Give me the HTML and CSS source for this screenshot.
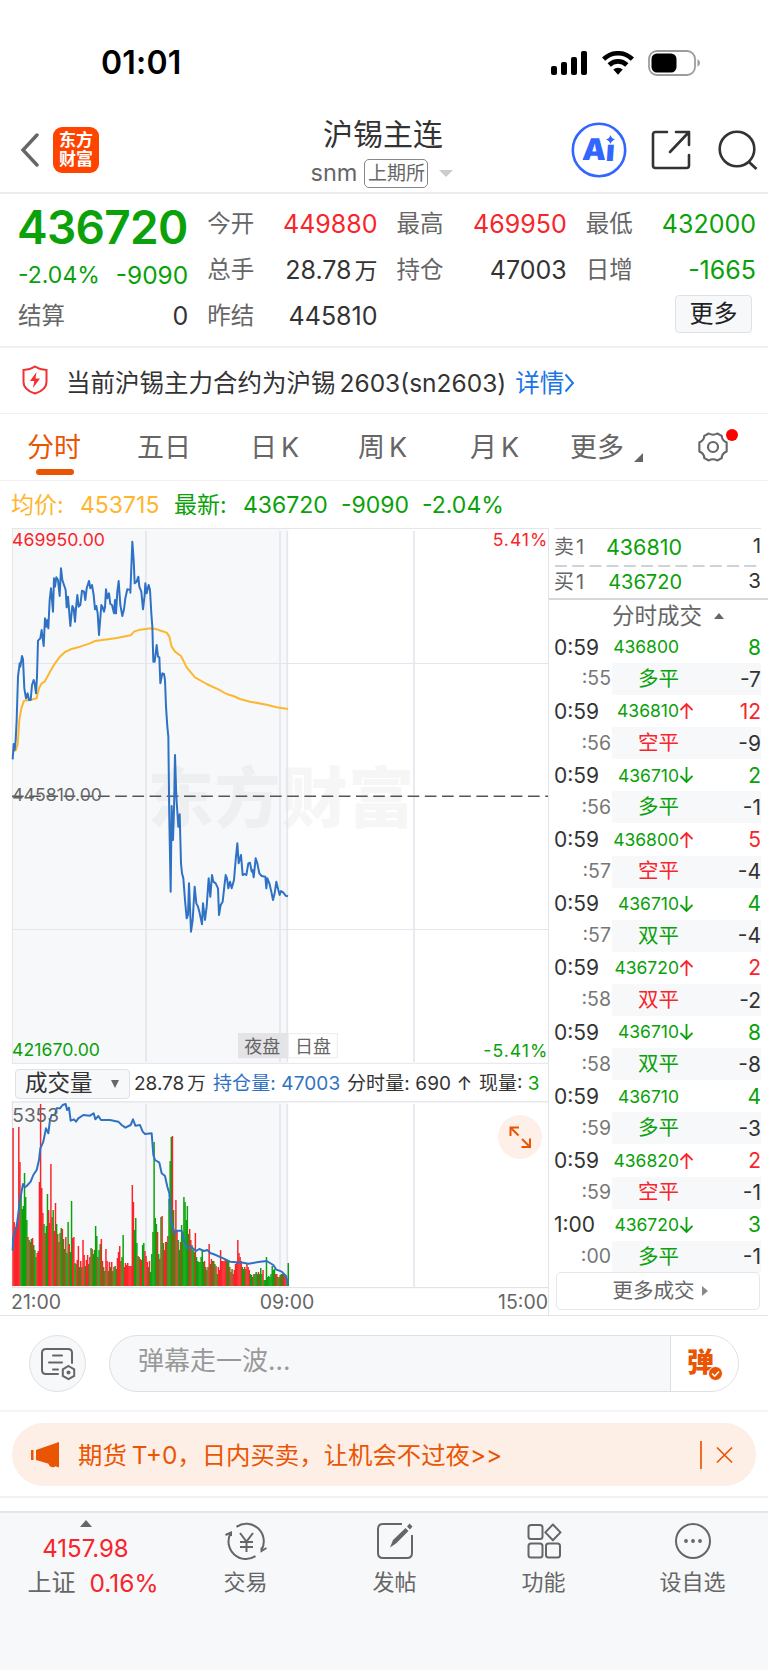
FILE: index.html
```html
<!DOCTYPE html>
<html lang="zh-CN">
<head>
  <meta charset="UTF-8">
  <meta name="viewport" content="width=device-width, initial-scale=1.0">
  <title>沪锡主连 - 东方财富</title>
  <link rel="stylesheet" href="styles.css">
</head>
<body>

<!-- 状态栏 -->
<div class="status">
  <span class="clock">01:01</span>
  <div class="status-icons">
    <svg width="38" height="24" viewBox="0 0 38 24"><rect x="1" y="15" width="6" height="9" rx="2"/><rect x="11" y="11" width="6" height="13" rx="2"/><rect x="21" y="6" width="6" height="18" rx="2"/><rect x="31" y="0" width="6" height="24" rx="2"/></svg>
    <svg class="wifi" width="32" height="24" viewBox="0 0 32 24"><g fill="none" stroke="#000" stroke-width="4.600"><path d="M1.600 8.200a20.400 20.400 0 0 1 28.800 0"/><path d="M7.200 14a12.600 12.600 0 0 1 17.600 0"/></g><path d="M11.300 18.600a6.800 6.800 0 0 1 9.400 0L16 23.700z"/></svg>
    <svg class="battery" width="53" height="26" viewBox="0 0 53 26"><rect x="1" y="1" width="46" height="24" rx="8" fill="none" stroke="#9c9c9c" stroke-width="1.800"/><rect x="3.500" y="3.500" width="25" height="19" rx="5.500"/><path d="M49.500 9v8q2.500-1.500 2.500-4t-2.500-4z" fill="#9c9c9c"/></svg>
  </div>
</div>

<!-- 标题栏 -->
<header class="header">
  <svg class="back" width="20" height="34" viewBox="0 0 20 34"><path d="M17 2 3 17l14 15" fill="none" stroke="#666" stroke-width="3.400" stroke-linecap="round"/></svg>
  <div class="logo"><span>东方</span><span>财富</span></div>
  <div class="title">
    <h1>沪锡主连</h1>
    <div class="sub"><span class="code">snm</span><span class="market">上期所</span><i class="caret"></i></div>
  </div>
  <div class="actions">
    <svg width="56" height="56" viewBox="0 0 56 56"><circle cx="28" cy="28" r="26.200" fill="none" stroke="#3366ff" stroke-width="2.600"/><g class="ai"><text x="13.500" y="38">A</text><text x="37" y="39">ı</text></g><path d="M39.500 13q1 3.500 4.500 4.500-3.500 1-4.500 4.500-1-3.500-4.500-4.500 3.500-1 4.500-4.500z" fill="#3366ff"/></svg>
    <svg class="share" width="40" height="40" viewBox="0 0 40 40"><path d="M16 2H4.500Q2 2 2 4.500v31Q2 38 4.500 38h31q2.500 0 2.500-2.500V25M25 2h13v13M38 2 19 22" fill="none" stroke="#333" stroke-width="2.600" stroke-linecap="round" stroke-linejoin="round"/></svg>
    <svg class="search" width="42" height="42" viewBox="0 0 42 42"><circle cx="20" cy="20" r="17.300" fill="none" stroke="#333" stroke-width="2.600"/><path d="m31.500 32.500 8 7.500" stroke="#333" stroke-width="2.800"/></svg>
  </div>
</header>

<!-- 行情数据 -->
<section class="quote">
  <div class="col main">
    <strong class="price">436720</strong>
    <div class="change"><span>-2.04%</span><span class="diff">-9090</span></div>
    <div class="cell"><label>结算</label><b>0</b></div>
  </div>
  <div class="col">
    <div class="cell"><label>今开</label><b class="up">449880</b></div>
    <div class="cell"><label>总手</label><b>28.78<em>万</em></b></div>
    <div class="cell"><label>昨结</label><b>445810</b></div>
  </div>
  <div class="col">
    <div class="cell"><label>最高</label><b class="up">469950</b></div>
    <div class="cell"><label>持仓</label><b>47003</b></div>
  </div>
  <div class="col">
    <div class="cell"><label>最低</label><b class="down">432000</b></div>
    <div class="cell"><label>日增</label><b class="down">-1665</b></div>
    <div class="cell"><button class="more">更多</button></div>
  </div>
</section>

<!-- 公告 -->
<div class="notice">
  <svg width="26" height="30" viewBox="0 0 26 30"><path d="M13 1.500Q18 4.800 24.500 5v12q0 8-11.500 11.500Q1.500 25 1.500 17V5Q8 4.800 13 1.500z" fill="none" stroke="#f23030" stroke-width="2"/><path d="M14.500 7 8 16h4.300L11 23l7-9.500h-4.500z" fill="#f23030"/></svg>
  <span class="notice-text">当前沪锡主力合约为沪锡<span class="num">2603(sn2603)</span></span>
  <a>详情<svg width="11" height="20" viewBox="0 0 11 20"><path d="m1.500 1.500 7.500 8.500-7.500 8.500" fill="none" stroke="#1a76e6" stroke-width="1.900"/></svg></a>
</div>

<!-- 周期切换 -->
<nav class="tabs">
  <span class="active">分时</span>
  <span>五日</span>
  <span>日<i>K</i></span>
  <span>周<i>K</i></span>
  <span>月<i>K</i></span>
  <span class="tab-more">更多<svg width="9" height="9" viewBox="0 0 9 9"><path d="M9 0v9H0z" fill="#666"/></svg></span>
  <div class="gear">
    <svg width="32" height="32" viewBox="0 0 32 32"><path d="M12 2.500q4 2.600 8 0l4.300 2.300q0 4.600 4.700 6.700v9q-4.700 2.100-4.700 6.700L20 29.500q-4-2.600-8 0l-4.300-2.300Q7.700 22.600 3 20.500v-9q4.700-2.100 4.700-6.700z" transform="translate(-.8 0) scale(1.050 1)" fill="none" stroke="#666" stroke-width="2" stroke-linejoin="round"/><circle cx="16" cy="16" r="5" fill="none" stroke="#666" stroke-width="2.200"/></svg>
    <i class="dot"></i>
  </div>
</nav>

<div class="legend">
  <span class="avg">均价:</span><span class="avg avg-num">453715</span>
  <span class="last">最新:</span><span class="down n1">436720</span><span class="down n2">-9090</span><span class="down n3">-2.04%</span>
</div>

<div class="board">
  <div class="charts">
    <!-- 分时图 -->
    <svg class="chart" viewBox="0 24 1647 1608">
      <rect x="36" y="26" width="826" height="1606" fill="#f7f8fa"/>
      <g font-size="198" font-weight="900" fill="#000" fill-opacity=".035" class="mark"><text x="443" y="906" textLength="800">东方财富</text></g>
      <g stroke="#e4e6ec" fill="none">
        <path d="M36 25.500h1611M36 1630h1611" stroke-width="3"/>
        <path d="M36 430.500h1608M36 1228.500h1608" stroke-width="3.500"/>
        <path d="M438 33v1593M840 33v1593M862 33v1593M1242 33v1593" stroke-width="5"/>
        <path d="M37 24v1608" stroke-width="3"/>
      </g>
      <path d="M36 829h1608" stroke="#555" stroke-width="4.500" stroke-dasharray="35 16.600"/>
      <polyline class="avg-line" points="41,694 48,690 53,672 58,600 64,565 72,542 90,540 110,535 117,505 125,490 134,485 150,455 165,430 180,410 195,396 212,388 240,380 270,370 285,363 330,357 350,354 392,346 402,335 420,329 455,325 470,328 485,333 500,338 508,350 515,380 525,395 543,408 560,442 585,472 620,492 655,508 680,522 700,528 720,537 750,545 800,554 830,562 864,567"/>
      <polyline class="price-line" points="38,718 41,672 44,690 47,660 50,600 54,470 59,430 61,440 66,408 69,418 73,505 78,535 83,520 87,540 92,540 96,495 101,480 104,490 108,520 111,470 114,362 121,355 125,330 131,378 135,295 139,320 142,300 145,325 149,240 153,205 159,275 162,175 165,200 169,172 174,180 179,228 183,145 187,180 197,210 200,262 204,230 211,318 217,258 221,265 225,305 228,265 232,225 236,260 241,255 246,212 252,215 256,240 260,205 267,183 271,205 276,195 281,225 285,268 289,258 293,280 297,345 304,255 308,262 312,275 315,262 318,208 322,235 327,220 331,252 336,255 342,280 345,240 348,280 352,215 356,183 361,255 367,288 372,268 376,235 382,208 391,210 391,218 397,65 401,120 404,190 410,185 415,170 418,200 424,215 429,268 434,225 436,190 440,220 446,195 450,210 454,280 457,320 460,425 464,425 470,375 474,410 478,412 481,490 487,460 492,462 495,480 498,560 502,620 505,650 508,900 512,1115 515,858 519,960 522,870 525,705 529,830 535,920 539,883 543,1030 546,1060 550,1075 555,1140 560,1195 564,1185 567,1090 573,1235 578,1200 584,1100 589,1150 594,1160 598,1175 606,1213 609,1150 615,1200 620,1160 626,1075 631,1130 636,1065 640,1085 647,1090 654,1105 657,1185 662,1155 668,1145 673,1100 677,1065 681,1075 685,1105 690,1085 695,1105 702,1080 707,1020 712,970 716,1030 723,1005 728,1065 734,1062 739,1065 745,1030 750,1028 755,1055 758,1050 761,1072 767,1015 772,1030 778,1060 785,1068 796,1070 799,1105 802,1075 808,1090 814,1115 819,1140 824,1120 829,1085 835,1110 839,1125 843,1113 850,1118 857,1127 864,1129"/>
      <g class="axis">
        <text x="36" y="77" fill="#f8252a" textLength="279">469950.00</text>
        <text x="1642" y="77" fill="#f8252a" text-anchor="end" textLength="164">5.41%</text>
        <text x="36" y="842" fill="#666" textLength="270">445810.00</text>
        <text x="36" y="1608" fill="#0aa10a" textLength="264">421670.00</text>
        <text x="1642" y="1610" fill="#0aa10a" text-anchor="end" textLength="192">-5.41%</text>
      </g>
      <rect x="714" y="1539" width="148" height="76" fill="#e4e4e6"/>
      <rect x="865" y="1541" width="147" height="72" fill="#fff" stroke="#ececee" stroke-width="3"/>
      <g class="axis session"><text x="733" y="1600">夜盘</text><text x="885" y="1600">日盘</text></g>
    </svg>

    <div class="vol-info">
      <span class="select">成交量<i></i></span>
      <span class="v1">28.78<em>万</em></span><span class="v2">持仓量: 47003</span><span class="v3">分时量: 690 ↑</span><span class="v4">现量: <b class="down">3</b></span>
    </div>

    <!-- 成交量图 -->
    <div class="vol-wrap">
      <svg class="vol" viewBox="0 123 1647 564">
        <rect x="36" y="125" width="826" height="559" fill="#f7f8fa"/>
        <g stroke="#e4e6ec" fill="none">
          <path d="M438 132v550M840 132v550M862 132v550M1242 132v550" stroke-width="5"/>
          <path d="M37 124v560M36 125.500h1608M36 683h1608" stroke="#dcdee4" stroke-width="3"/>
        </g>
        <g id="bars"></g>
        <polyline class="price-line" points="38,572 40,530 50,500 60,420 69,372 74,382 80,378 92,365 100,345 110,330 117,300 121,265 130,245 138,205 145,220 150,180 155,165 165,165 170,145 180,145 188,135 197,132 201,150 207,143 212,182 222,178 228,185 235,175 250,165 270,167 281,160 286,178 295,168 303,180 330,180 355,185 365,195 376,203 392,195 399,178 406,197 420,195 428,215 435,222 455,220 460,285 465,300 478,308 485,340 495,348 502,380 508,400 514,490 525,520 530,512 545,512 553,545 562,565 575,562 588,573 598,567 612,573 622,570 632,580 640,582 670,595 690,605 730,608 745,611 775,606 800,603 820,615 828,628 845,635 858,648 865,675"/>
        <text class="vol-max" x="37" y="187">5353</text>
      </svg>
      <div class="expand"><svg width="22" height="22" viewBox="0 0 22 22"><path d="M1.500 10V1.500H10M1.500 1.500l8 8M12.500 21H21v-8.500M21 21l-8-8" fill="none" stroke="#ea5504" stroke-width="2"/></svg></div>
    </div>

    <div class="times"><span>21:00</span><span class="mid">09:00</span><span>15:00</span></div>
  </div>

  <!-- 盘口与成交明细 -->
  <aside class="side">
    <div class="ask"><span>卖1</span><b>436810</b><i>1</i></div>
    <svg class="dash" width="202" height="2"><path d="M0 1h202" stroke="#cfd2d8" stroke-width="2" stroke-dasharray="12 5.200"/></svg>
    <div class="ask bid"><span>买1</span><b>436720</b><i>3</i></div>
    <div class="side-head">分时成交<i></i></div>
    <div id="ticks"></div>
    <div class="more-ticks">更多成交<i></i></div>
  </aside>
</div>

<!-- 弹幕 -->
<div class="danmu">
  <div class="danmu-set">
    <svg width="36" height="34" viewBox="0 0 36 34"><path d="M18 27H6q-4 0-4-4V6q0-4 4-4h22q4 0 4 4v10M13 8.500h9M9 15.500h13M13 22.500h5" fill="none" stroke="#666" stroke-width="2" stroke-linecap="round"/><path d="m28.500 19 5.700 3.300v6.500l-5.700 3.300-5.700-3.300v-6.500z" fill="#f7f8fa" stroke="#666" stroke-width="2"/><circle cx="28.500" cy="25.500" r="2" fill="#666"/></svg>
  </div>
  <div class="danmu-box">
    <span class="placeholder">弹幕走一波...</span>
    <div class="danmu-btn">弹<svg width="15" height="15" viewBox="0 0 15 15"><circle cx="7.500" cy="7.500" r="7" fill="#ea5504" stroke="#fff"/><path d="m4 7.500 2.700 2.700L11 5.500" fill="none" stroke="#fff" stroke-width="1.600"/></svg></div>
  </div>
</div>

<div class="promo">
  <svg class="horn" width="30" height="26" viewBox="0 0 30 26"><path d="M1 8h2.500v10H1zM6 8 29 0v25.500l-3.500-1.300q-1.500 1.500-4 .8-2.500-.5-3-3.200L9.500 19 6 18z" fill="#ea5504"/></svg>
  <span>期货<em>T+0</em>，日内买卖，让机会不过夜&gt;&gt;</span>
  <svg class="close" width="34" height="30" viewBox="0 0 34 30"><path d="M1 1v28M17 7.500l15 15M32 7.500l-15 15" fill="none" stroke="#ea5504" stroke-width="1.700"/></svg>
</div>

<!-- 底部导航 -->
<footer class="bottom">
  <div class="index">
    <i></i>
    <b>4157.98</b>
    <div>上证<b>0.16%</b></div>
  </div>
  <div class="item">
    <svg width="42" height="38" viewBox="0 0 42 38"><g fill="none" stroke="#666" stroke-width="2"><path d="M11.500 4.800A17.500 17.500 0 0 1 37 27M30.500 34.200A17.500 17.500 0 0 1 5.200 12"/><path d="M.5 13 6 10.500V14M41.500 26 36.500 29v-3.500"/><path d="m15 11 6.500 8.500L28 11M21.500 19.500V30M15 20h13M15 25h13"/></g></svg>
    <span>交易</span>
  </div>
  <div class="item">
    <svg width="38" height="38" viewBox="0 0 38 38"><path d="M26 2H7Q2 2 2 7v24q0 5 5 5h24q5 0 5-5V13" fill="none" stroke="#666" stroke-width="2"/><path d="M14 25.500 17 18 29.500 6l3 3L20 21.500zM31 4.500l2.500-3 3 3-2.500 3z" fill="#666"/></svg>
    <span>发帖</span>
  </div>
  <div class="item">
    <svg width="36" height="38" viewBox="0 0 36 38"><g fill="none" stroke="#666" stroke-width="2"><rect x="2.500" y="3" width="14" height="14" rx="2.500"/><rect x="2.500" y="21.500" width="14" height="14" rx="2.500"/><rect x="20" y="21.500" width="14" height="14" rx="2.500"/><path d="m26.900 2.500 7.600 7.900-7.600 7.900-7.600-7.900z" stroke-linejoin="round"/></g></svg>
    <span>功能</span>
  </div>
  <div class="item">
    <svg width="38" height="38" viewBox="0 0 38 38"><circle cx="19" cy="19" r="17" fill="none" stroke="#666" stroke-width="2"/><g fill="#666"><circle cx="12" cy="19" r="1.900"/><circle cx="19" cy="19" r="1.900"/><circle cx="26" cy="19" r="1.900"/></g></svg>
    <span>设自选</span>
  </div>
</footer>

<script src="script.js"></script>
</body>
</html>
```
FILE: styles.css
```css
* {
  box-sizing: border-box;
}

body {
  margin: 0;
  width: 768px;
  height: 1670px;
  overflow: hidden;
  background: #fff;
  color: #333;
  font-family: Inter, "Noto Sans CJK SC", sans-serif;
  font-size: 24px;
  line-height: 1;
}

b, i, em, h1 {
  font-weight: 400;
  font-style: normal;
  margin: 0;
}

svg {
  display: block;
  flex: none;
}

.up { color: #f8252a; }
.down { color: #0aa10a; }

/* 状态栏 */
.status {
  height: 96px;
  padding: 28px 67px 0 101px;
  display: flex;
  justify-content: space-between;
}

.clock {
  font-size: 32px;
  font-weight: 600;
  color: #000;
  line-height: 69px;
  letter-spacing: .2px;
}

.status-icons {
  display: flex;
  align-items: center;
  height: 69px;
}

.wifi { margin-left: 14px; }
.battery { margin-left: 14px; }

/* 标题栏 */
.header {
  height: 98px;
  display: flex;
  align-items: center;
  padding: 11px 9px 0 20px;
  border-bottom: 2px solid #ececec;
}

.logo {
  width: 46px;
  height: 46px;
  margin-left: 13px;
  border-radius: 9px;
  background: #ff4400;
  color: #fff;
  font-size: 17px;
  font-weight: 700;
  line-height: 19px;
  display: flex;
  flex-direction: column;
  align-items: center;
  justify-content: center;
}

.title {
  width: 160px;
  height: 98px;
  margin: -12px auto 0 204px;
  padding-top: 23px;
  display: flex;
  flex-direction: column;
  align-items: center;
}

h1 {
  font-size: 30px;
  line-height: 32px;
}

.sub {
  display: flex;
  align-items: center;
  margin: 9px 0 0 -2px;
  color: #666;
}

.code {
  font-size: 23.5px;
}

.market {
  width: 64px;
  height: 29px;
  margin: 0 11px 0 7px;
  border: 1.500px solid #888;
  border-radius: 5px;
  font-size: 19px;
  line-height: 27px;
  text-align: center;
}

.caret {
  border: 7px solid transparent;
  border-top-color: #ccc;
  border-bottom: 0;
}

.actions {
  display: flex;
  align-items: center;
}

.ai {
  font-size: 30px;
  font-weight: 900;
  fill: #3366ff;
  transform: skewX(-4deg);
}

.share { margin-left: 24px; }
.search { margin-left: 26px; }

/* 行情数据 */
.quote {
  height: 154px;
  padding: 7px 12px 0 18px;
  display: flex;
  gap: 19px;
  border-bottom: 2px solid #f0f0f0;
}

.col {
  width: 170.5px;
}

.cell {
  height: 46px;
  display: flex;
  align-items: center;
  justify-content: space-between;
}

.cell label {
  color: #666;
  font-size: 23.5px;
}

.cell b {
  font-size: 25px;
}

.cell em {
  font-size: 23px;
  margin-left: 3px;
}

.price {
  display: block;
  height: 53px;
  line-height: 53px;
  margin-left: -1px;
  font-size: 46px;
  font-weight: 600;
  letter-spacing: -.7px;
  color: #0aa10a;
}

.change {
  height: 39px;
  padding-top: 4px;
  display: flex;
  align-items: center;
  justify-content: space-between;
  color: #0aa10a;
  font-size: 23px;
}

.diff {
  font-size: 24.5px;
}

.more {
  width: 77px;
  height: 38px;
  margin: -4px 4px 0 auto;
  padding: 0;
  border: 1.500px solid #dfe1e6;
  border-radius: 4px;
  background: #f7f8fa;
  color: #222;
  font: inherit;
  font-size: 24px;
}

/* 公告 */
.notice {
  height: 66px;
  padding: 5px 0 0 22px;
  display: flex;
  align-items: center;
  border-bottom: 1px solid #f0f0f0;
  font-size: 24.5px;
}

.notice svg {
  margin-top: -7px;
}

.notice-text {
  margin-left: 18px;
}

.num {
  margin-left: 4px;
}

.notice a {
  display: flex;
  align-items: center;
  margin-left: 9px;
  color: #1a76e6;
}

.notice a svg {
  margin: 0;
}

/* 周期切换 */
.tabs {
  position: relative;
  height: 67px;
  display: flex;
  align-items: center;
  padding-left: 27px;
  border-bottom: 1px solid #f0f0f0;
  color: #666;
  font-size: 27px;
}

.tabs span {
  position: relative;
  width: 110px;
  white-space: nowrap;
}

.tabs span i { margin-left: 4px; }
.tabs span:nth-child(3) { margin-left: 3px; }
.tabs span:nth-child(4) { margin-left: -2px; }
.tabs span:nth-child(5) { margin-left: 2px; width: 100px; }

.tabs .active {
  color: #ea5504;
}

.active::after {
  content: "";
  position: absolute;
  left: 9px;
  top: 35px;
  width: 38px;
  height: 6px;
  border-radius: 3px;
  background: #ea5504;
}

.tabs .tab-more {
  display: flex;
  align-items: flex-end;
  width: 127px;
}

.tab-more svg { margin: 0 0 -1px 10px; }

.gear { position: relative; }

.dot {
  position: absolute;
  left: 29px;
  top: -2px;
  width: 12px;
  height: 12px;
  border-radius: 50%;
  background: #f00;
}

.legend {
  height: 47px;
  padding: 2px 0 0 11px;
  display: flex;
  align-items: center;
  color: #0aa10a;
  font-size: 23px;
}

.avg { color: #ffb52e; }
.avg { width: 69px; }
.legend .avg-num { width: 94px; }
.last { width: 69px; }
.n1 { width: 98px; }
.n2 { width: 81px; }

/* 图表区 */
.board {
  height: 788px;
  display: flex;
  border-bottom: 1px solid #e2e4e8;
}

.charts {
  width: 549px;
  border-right: 1px solid #e2e4e8;
}

.chart {
  width: 549px;
  height: 536px;
}

.price-line, .avg-line {
  fill: none;
  stroke: #2f72c4;
  stroke-width: 6;
  stroke-linejoin: round;
}

.avg-line { stroke: #fdb62f; }

.axis {
  font-size: 53px;
}

.session {
  font-size: 54px;
  fill: #666;
}

.vol-max {
  font-size: 57px;
  fill: #666;
}

.vol-info {
  height: 37px;
  padding: 2px 0 0 15px;
  display: flex;
  align-items: center;
  font-size: 19px;
  color: #333;
  white-space: nowrap;
}

.vol-info em { font-size: 18.5px; margin-left: 3px; }

.select {
  width: 115px;
  height: 30px;
  padding: 0 10px 0 9px;
  display: flex;
  align-items: center;
  justify-content: space-between;
  border: 1.500px solid #dfe1e6;
  border-radius: 4px;
  background: #f7f8fa;
  font-size: 22.5px;
}

.select i {
  border: 4.500px solid transparent;
  border-top: 8px solid #666;
  border-bottom: 0;
}

.v1 { margin-left: 4px; width: 79px; }
.v2 { width: 134px; color: #2f72c4; letter-spacing: .1px; }
.v3 { width: 132px; letter-spacing: .1px; }

.vol-wrap {
  position: relative;
  height: 188px;
}

.vol {
  width: 549px;
  height: 188px;
}

.expand {
  position: absolute;
  left: 498px;
  top: 14px;
  width: 44px;
  height: 44px;
  border-radius: 50%;
  background: #feefe8;
  display: flex;
  align-items: center;
  justify-content: center;
}

.times {
  height: 26px;
  padding: 2px 0 0 11px;
  display: flex;
  align-items: center;
  justify-content: space-between;
  color: #666;
  font-size: 19.5px;
}

.mid { margin-left: 15px; }

/* 盘口 */
.side {
  width: 219px;
  padding-left: 5px;
}

.ask {
  height: 36px;
  width: 207px;
  display: flex;
  align-items: center;
  justify-content: space-between;
  border-top: 1px solid #e2e4e8;
  line-height: 32px;
}

.ask span { color: #666; font-size: 20px; width: 40px; letter-spacing: 2px; }
.ask b { color: #0aa10a; font-size: 21.5px; width: 88px; text-align: right; }
.ask i { flex: 1; text-align: right; font-size: 20.5px; padding-bottom: 1px; }

.dash { margin: 1px 0 -1px 1px; }

.bid {
  height: 31px;
  border: 0;
}

.bid b { font-size: 20px; }

.side-head {
  height: 47px;
  margin-left: -5px;
  margin-top: 1px;
  padding: 0 0 13px 63px;
  display: flex;
  align-items: center;
  border-top: 2px solid #d4d7dc;
  color: #666;
  font-size: 22.5px;
}

.side-head i {
  margin-left: 12px;
  border: 5px solid transparent;
  border-bottom: 6px solid #666;
  border-top: 0;
}

#ticks {
  margin-top: -14px;
}

.tick {
  display: flex;
  align-items: center;
  width: 207px;
  height: 32.1px;
  font-size: 21px;
}

.tick .t { width: 57px; }
.tick .p { width: 68px; text-align: right; font-size: 17.5px; white-space: nowrap; }
.tick .a { width: 15px; }
.tick .q { flex: 1; text-align: right; }

.tick.alt .t { text-align: right; color: #777; font-size: 19.5px; }
.tick.alt .p { font-size: 20.5px; }
.tick.alt { background: linear-gradient(#f7f8fa, #f7f8fa) 58px 0 / 150px 32px no-repeat; }

.more-ticks {
  width: 204px;
  height: 38px;
  margin: -1px 0 0 2px;
  padding-left: 4px;
  display: flex;
  align-items: center;
  justify-content: center;
  border: 1px solid #e6e7ea;
  border-radius: 5px;
  color: #666;
  font-size: 20.5px;
}

.more-ticks i {
  margin-left: 7px;
  border: 5px solid transparent;
  border-left: 6px solid #888;
  border-right: 0;
}

/* 弹幕 */
.danmu {
  height: 96px;
  padding: 0 29px;
  display: flex;
  align-items: center;
  justify-content: space-between;
  border-bottom: 2px solid #f5f5f6;
}

.danmu-set {
  width: 57px;
  height: 57px;
  border: 1.500px solid #dfe1e6;
  border-radius: 50%;
  background: #f7f8fa;
  display: flex;
  align-items: center;
  justify-content: center;
}

.danmu-set svg { margin-top: 2px; }

.danmu-box {
  width: 630px;
  height: 57px;
  border: 1.500px solid #dcdfe4;
  border-radius: 29px;
  background: #f7f8fa;
  overflow: hidden;
  display: flex;
  align-items: center;
  justify-content: space-between;
}

.placeholder {
  margin: -4px 0 0 28px;
  color: #999;
  font-size: 26px;
}

.danmu-btn {
  position: relative;
  width: 68px;
  height: 57px;
  padding: 2px 0 0 16px;
  border-left: 1px solid #dcdfe4;
  background: #fff;
  color: #ea5504;
  font-size: 27px;
  font-weight: 900;
  line-height: 52px;
}

.danmu-btn svg {
  position: absolute;
  left: 37px;
  top: 31px;
}

/* 推广 */
.promo {
  height: 63px;
  margin: 11px 12px;
  padding: 0 22px 0 18px;
  border-radius: 32px;
  background: #fdeee6;
  color: #ea5504;
  display: flex;
  align-items: center;
  font-size: 24.4px;
}

.promo span { margin: 1px 0 0 18px; }
.promo em { margin-left: 5px; }
.close { margin-left: auto; }

/* 底部导航 */
.bottom {
  position: relative;
  height: 160px;
  margin-top: 25px;
  padding-top: 8px;
  display: flex;
  border-top: 2px solid #e3e5e9;
  background: #f7f8fa;
  color: #666;
}

.bottom::before {
  content: "";
  position: absolute;
  top: -17px;
  left: 0;
  right: 0;
  height: 2px;
  background: #f2f2f3;
}

.index {
  width: 171px;
  display: flex;
  flex-direction: column;
  align-items: center;
  font-size: 24px;
}

.index i {
  border: 6.500px solid transparent;
  border-bottom: 7px solid #666;
  border-top: 0;
  margin-top: -1px;
}

.index b { color: #f8252a; font-size: 24px; margin: 10px 0; }
.index div { display: flex; align-items: center; padding-left: 15px; }
.index div b { margin: 0 0 0 14px; font-size: 24.5px; }

.item {
  width: 149px;
  padding-top: 1px;
  display: flex;
  flex-direction: column;
  align-items: center;
  font-size: 22px;
}

.item span { margin-top: 11px; }
```
FILE: script.js
```js
// 每分钟成交量: r 涨 / g 跌, 后面是柱高
var volumes = 'r158 r64 r59 r62 r67 r159 r124 g92 g77 g80 g113 g89 g66 r49 g46 r44 g47 r48 g41 g36 g29 r33 r35 r104 r182 r98 r73 g62 r53 g60 ' +
  'g92 r76 r63 r122 r69 g76 r55 r83 g62 r52 r44 g53 g58 r57 g47 g37 r49 g33 g64 r42 g34 g85 r48 r49 g23 g22 r26 r40 g19 r25 ' +
  'g19 r46 r31 g20 r26 r31 g22 r29 g38 r37 g32 g36 g60 g50 r29 g36 g42 r47 r25 g19 g15 r37 r25 g15 r24 g19 r24 g15 r19 g20 ' +
  'g17 r28 r34 r40 r25 g29 g51 r19 r23 r21 r23 r20 r20 r20 r101 r84 g56 g68 g43 r30 g29 r27 r26 g41 g43 r35 r30 r24 g19 r25 ' +
  'g14 g32 g54 g144 g68 g62 r54 g32 r27 g69 r70 g43 r36 r44 g44 r50 g87 g125 g149 r150 g76 g56 r86 r56 g46 g36 r44 g61 g54 g89 ' +
  'g84 g66 g80 g52 r57 r46 g41 g36 g34 r53 g29 g25 g24 g24 g29 g36 g24 r25 g19 g16 r19 r42 g22 r27 r25 g25 g22 r20 g12 r19 ' +
  'r16 r36 r25 r25 r25 r26 r25 g25 g24 r19 r14 g17 r12 r16 r22 r24 r46 r33 r29 r25 g19 g17 r19 g17 r22 r19 r16 g12 g11 g9 ' +
  'r12 g12 g14 g12 r14 g12 g18 g12 r16 g6 g6 g29 g9 g10 g9 g12 g20 g16 g17 r12 r12 g9 g9 r11 g12 g12 r12 r11 r9 g7 g23';

var bars = '';
volumes.split(' ').forEach(function(v, i) {
  var h = v.slice(1) * 3;
  bars += '<rect x="' + (37 + i * 3.44) + '" y="' + (678 - h) + '" width="4.4" height="' + h + '" fill="' + (v[0] == 'r' ? '#fa2328' : '#0aa10a') + '"/>';
});
document.getElementById('bars').innerHTML = bars;

// 分时成交: 时间, 价格, 箭头, 手数, 颜色, 秒, 性质, 颜色, 增仓
var ticks = [
  ['0:59', '436800', '', 8, 'down', ':55', '多平', 'down', -7],
  ['0:59', '436810', '↑', 12, 'up', ':56', '空平', 'up', -9],
  ['0:59', '436710', '↓', 2, 'down', ':56', '多平', 'down', -1],
  ['0:59', '436800', '↑', 5, 'up', ':57', '空平', 'up', -4],
  ['0:59', '436710', '↓', 4, 'down', ':57', '双平', 'down', -4],
  ['0:59', '436720', '↑', 2, 'up', ':58', '双平', 'up', -2],
  ['0:59', '436710', '↓', 8, 'down', ':58', '双平', 'down', -8],
  ['0:59', '436710', '', 4, 'down', ':59', '多平', 'down', -3],
  ['0:59', '436820', '↑', 2, 'up', ':59', '空平', 'up', -1],
  ['1:00', '436720', '↓', 3, 'down', ':00', '多平', 'down', -1]
];

var arrows = {
  '↑': '<svg width="14" height="18" viewBox="0 0 14 18"><path d="M7.500 17V2M1.500 8l6-6 6 6" fill="none" stroke="#f8252a" stroke-width="1.800"/></svg>',
  '↓': '<svg width="14" height="18" viewBox="0 0 14 18"><path d="M7.500 1v15M1.500 10l6 6 6-6" fill="none" stroke="#0aa10a" stroke-width="1.800"/></svg>',
  '': ''
};

document.getElementById('ticks').innerHTML = ticks.map(function(t) {
  return '<div class="tick"><span class="t">' + t[0] + '</span><span class="p down">' + t[1] + '</span><span class="a">' + arrows[t[2]] + '</span><span class="q ' + t[4] + '">' + t[3] + '</span></div>' +
    '<div class="tick alt"><span class="t">' + t[5] + '</span><span class="p ' + t[7] + '">' + t[6] + '</span><span class="q">' + t[8] + '</span></div>';
}).join('');
```
